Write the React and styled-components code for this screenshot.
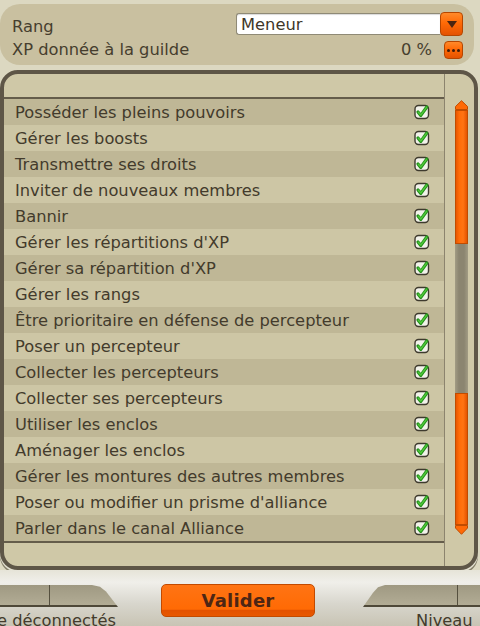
import React from 'react'
import styled, { createGlobalStyle } from 'styled-components'

const GlobalStyle = createGlobalStyle`
    html, body {
        margin: 0;
        padding: 0;
    }
    body {
        background: #dcd8c1;
        font-family: "DejaVu Sans", Verdana, sans-serif;
    }
`;

const Page = styled.div`
    width: 480px;
    height: 626px;
    overflow: hidden;
    display: flex;
    flex-direction: column;
    background: #dcd8c1;
    color: #463e2e;
    font-size: 16.3px;
`;

const TopPanel = styled.div`
    flex-shrink: 0;
    margin: 4px 6px 0 0;
    height: 61px;
    box-sizing: border-box;
    padding: 8px 11px 6px 12px;
    border-radius: 20px;
    background: #c9c0a0;
    display: grid;
    grid-template-columns: 1fr auto;
    grid-template-rows: 24px 18px;
    row-gap: 5px;
    align-items: center;
`;

const Label = styled.div`
    line-height: 18px;
    padding-top: ${p => p.$drop || 0}px;
`;

const SelectBox = styled.div`
    display: flex;
    align-items: center;
`;

const SelectValue = styled.div`
    width: 204px;
    height: 22px;
    box-sizing: border-box;
    padding-left: 4px;
    line-height: 21px;
    background: #fff;
    border: 1px solid #8f8a76;
    border-right: none;
    border-radius: 3px 0 0 3px;
    color: #3e3628;
    box-shadow: inset 0 1px 1px rgba(0, 0, 0, 0.15);
`;

const OrangeButton = styled.div`
    width: ${p => p.$w}px;
    height: ${p => p.$h}px;
    box-sizing: border-box;
    border-radius: 4px;
    border: 1px solid #b54600;
    background: linear-gradient(180deg, #ff8a2a 0%, #ff6a06 45%, #e45200 100%);
    display: flex;
    align-items: center;
    justify-content: center;
    gap: 2px;
`;

const TriangleDown = styled.div`
    width: 0;
    height: 0;
    border-left: 5px solid transparent;
    border-right: 5px solid transparent;
    border-top: 7px solid #4a2410;
    margin-top: 1px;
`;

const Dot = styled.span`
    width: 3px;
    height: 3px;
    border-radius: 50%;
    background: #3d1c0a;
`;

const XpValue = styled.div`
    display: flex;
    align-items: center;
    justify-content: flex-end;
    gap: 12px;
    line-height: 18px;
`;

const Frame = styled.div`
    flex-shrink: 0;
    margin: 5px 2px 0 0;
    height: 500px;
    box-sizing: border-box;
    border: 4px solid #5e5647;
    border-radius: 18px;
    background: #cfc8a7;
    display: flex;
    overflow: hidden;
    box-shadow: 0 2px 0 #e2dfcf, 0 4px 0 #857f6a;
`;

const ListColumn = styled.div`
    flex: 1;
    display: flex;
    flex-direction: column;
`;

const HeaderCell = styled.div`
    height: 23px;
    flex-shrink: 0;
    border-bottom: 2px solid #655d4b;
`;

const Row = styled.div`
    height: 26px;
    flex-shrink: 0;
    display: flex;
    align-items: center;
    justify-content: space-between;
    padding: 0 14px 0 11px;
    background: ${p => (p.$dark ? '#bfb796' : '#cdc6a5')};
    color: #433b2c;
    white-space: nowrap;
`;

const FooterCell = styled.div`
    flex: 1;
    border-top: 2px solid #655d4b;
`;

const ScrollColumn = styled.div`
    width: 30px;
    border-left: 1px solid #8c846e;
    padding-top: 26px;
    box-sizing: border-box;
`;

const ScrollBar = styled.div`
    width: 15px;
    margin-left: 9px;
    display: flex;
    flex-direction: column;
`;

const Thumb = styled.div`
    height: ${p => p.$h}px;
    margin: 0 1px;
    box-sizing: border-box;
    border: 1px solid #c04c00;
    background: linear-gradient(90deg, #e85600 0%, #ff6c08 30%, #ff7412 65%, #e45400 100%);
`;

const Track = styled.div`
    height: ${p => p.$h}px;
    margin: 0 1px;
    background: linear-gradient(90deg, #a29c84 0%, #8b8570 30%, #8b8570 70%, #a29c84 100%);
`;

const Footer = styled.div`
    flex: 1;
    min-height: 0;
    overflow: hidden;
    padding-top: 14px;
    display: flex;
    align-items: flex-start;
    background: linear-gradient(180deg, #e6e4d8 0%, #f0efea 22%, #d8d6cd 60%, #c8c4b4 100%);
`;

const Tab = styled.div`
    width: ${p => p.$w}px;
    flex-shrink: 0;
    margin-top: 1px;
    margin-left: ${p => p.$ml || 0}px;
    display: flex;
    flex-direction: column;
`;

const TabBar = styled.div`
    height: 20px;
    display: flex;
    background: linear-gradient(180deg, #9f9982 0%, #b2ac95 100%);
    border-bottom: 2px solid #4e4838;
    clip-path: ${p => p.$clip};
`;

const TabCell = styled.div`
    width: ${p => p.$w}px;
    border-right: ${p => (p.$line ? '1px solid #55503f' : 'none')};
`;

const TabLabel = styled.div`
    padding: 4px 0 0 ${p => p.$pl}px;
    line-height: 20px;
    color: #433b2c;
    white-space: nowrap;
`;

const ValidButton = styled.button`
    flex-shrink: 0;
    width: 154px;
    height: 33px;
    margin-left: 43px;
    padding: 0;
    border: 1px solid #c24a00;
    border-radius: 5px;
    background: linear-gradient(180deg, #ff7414 0%, #ff6a04 78%, #e35200 82%, #e85800 100%);
    font-family: "DejaVu Sans", Verdana, sans-serif;
    font-weight: bold;
    font-size: 18px;
    color: #4d2614;
    letter-spacing: 0.2px;
`;

const CheckBox = () => (
    <svg width="16" height="16" viewBox="0 0 16 16">
        <rect x="1" y="1.5" width="13.5" height="13" rx="3.5" fill="#f2f2ea" stroke="#3e3a2e" strokeWidth="1.4" />
        <path d="M4 8 L6.8 11.4 L12.8 3" fill="none" stroke="#23901a" strokeWidth="3.2" strokeLinecap="round" strokeLinejoin="round" />
        <path d="M4.4 8.2 L6.8 11 L12.5 3.3" fill="none" stroke="#4fc83a" strokeWidth="1.4" strokeLinecap="round" strokeLinejoin="round" />
    </svg>
);

const ArrowCap = ({ down }) => (
    <svg width="15" height="10" viewBox="0 0 15 10" style={{ display: 'block' }}>
        {down ? (
            <path d="M1.5 0.5 L13.5 0.5 L13.5 3 L7.5 9.3 L1.5 3 Z" fill="#ff6a06" stroke="#c04c00" strokeWidth="1" />
        ) : (
            <path d="M1.5 9.5 L13.5 9.5 L13.5 6.5 L7.5 0.7 L1.5 6.5 Z" fill="#ff6a06" stroke="#c04c00" strokeWidth="1" />
        )}
    </svg>
);

const rights = [
    'Posséder les pleins pouvoirs',
    'Gérer les boosts',
    'Transmettre ses droits',
    'Inviter de nouveaux membres',
    'Bannir',
    "Gérer les répartitions d'XP",
    "Gérer sa répartition d'XP",
    'Gérer les rangs',
    'Être prioritaire en défense de percepteur',
    'Poser un percepteur',
    'Collecter les percepteurs',
    'Collecter ses percepteurs',
    'Utiliser les enclos',
    'Aménager les enclos',
    'Gérer les montures des autres membres',
    "Poser ou modifier un prisme d'alliance",
    'Parler dans le canal Alliance',
];

export default function App() {
    return (
        <Page>
            <GlobalStyle />
            <TopPanel>
                <Label $drop={5}>Rang</Label>
                <SelectBox>
                    <SelectValue>Meneur</SelectValue>
                    <OrangeButton $w={23} $h={24}>
                        <TriangleDown />
                    </OrangeButton>
                </SelectBox>
                <Label>XP donnée à la guilde</Label>
                <XpValue>
                    <span>0 %</span>
                    <OrangeButton $w={19} $h={18}>
                        <Dot />
                        <Dot />
                        <Dot />
                    </OrangeButton>
                </XpValue>
            </TopPanel>

            <Frame>
                <ListColumn>
                    <HeaderCell />
                    {rights.map((r, i) => (
                        <Row key={r} $dark={i % 2 === 0}>
                            <span>{r}</span>
                            <CheckBox />
                        </Row>
                    ))}
                    <FooterCell />
                </ListColumn>
                <ScrollColumn>
                    <ScrollBar>
                        <ArrowCap />
                        <Thumb $h={134} />
                        <Track $h={149} />
                        <Thumb $h={132} />
                        <ArrowCap down />
                    </ScrollBar>
                </ScrollColumn>
            </Frame>

            <Footer>
                <Tab $w={118}>
                    <TabBar $clip="polygon(0 0, 92px 0, 100px 8%, 106px 30%, 118px 100%, 0 100%)">
                        <TabCell $w={49} $line />
                    </TabBar>
                    <TabLabel $pl={0} style={{ marginLeft: -3 }}>e déconnectés</TabLabel>
                </Tab>
                <ValidButton>Valider</ValidButton>
                <Tab $w={117} $ml={48}>
                    <TabBar $clip="polygon(0 100%, 10px 35%, 15px 10%, 22px 0, 100% 0, 100% 100%)">
                        <TabCell $w={94} $line />
                    </TabBar>
                    <TabLabel $pl={53}>Niveau</TabLabel>
                </Tab>
            </Footer>
        </Page>
    )
}
